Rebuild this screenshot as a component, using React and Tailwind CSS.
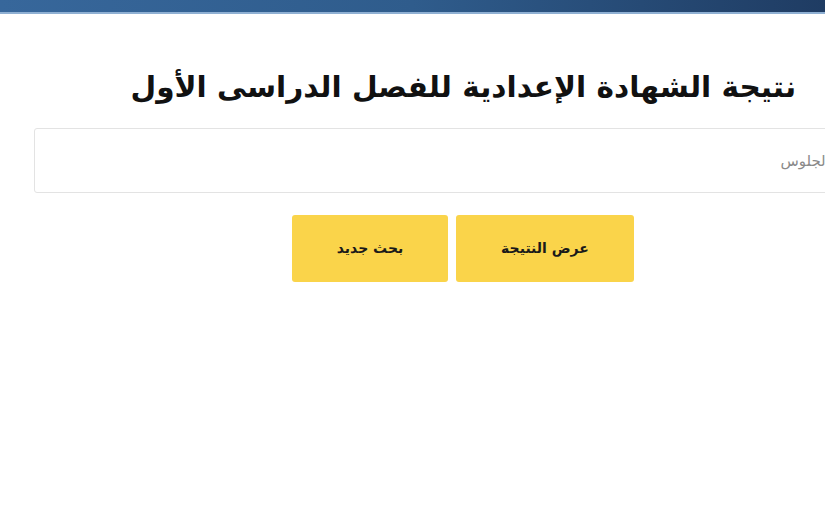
import React from 'react';

const App = () => {
  return (
    <div className="w-[825px] h-[531px] overflow-hidden bg-white" style={{ fontFamily: '"DejaVu Sans", sans-serif' }}>
      {/* Header strip */}
      <div className="h-[14px] bg-gradient-to-r from-[#37679b] via-[#2f5c8c] to-[#1f3c63] border-b-2 border-[#8fb0d3]" />

      <div dir="rtl" className="ml-[34px] w-[844px] pt-[51px]">
        <h1 className="pr-[82px] text-[29.6px] font-bold text-[#111] leading-[44px]">
          نتيجة الشهادة الإعدادية للفصل الدراسى الأول
        </h1>

        <div className="mt-[19px]">
          <input
            type="text"
            placeholder="رقم الجلوس"
            className="w-full h-[65px] border border-[#e3e3e3] rounded-[3px] px-[18px] text-[15px] placeholder:text-[#8a8a8a] outline-none"
          />
        </div>

        <div className="flex gap-[8px] pr-[244px] mt-[22px]">
          <button className="w-[178px] h-[67px] bg-[#fad44a] rounded-[3px] text-[14px] font-bold text-[#1a1a1a]">
            عرض النتيجة
          </button>
          <button className="w-[156px] h-[67px] bg-[#fad44a] rounded-[3px] text-[14px] font-bold text-[#1a1a1a]">
            بحث جديد
          </button>
        </div>
      </div>
    </div>
  );
};

export default App;
